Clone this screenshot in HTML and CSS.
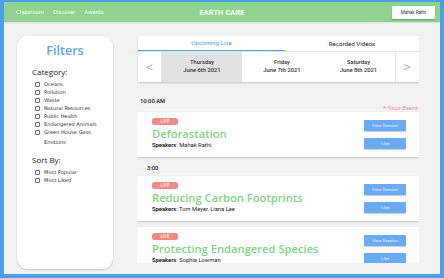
FILE: index.html
```html
<!DOCTYPE html>
<html>
<head>
<meta charset="utf-8">
<link rel="stylesheet" href="styles.css">
</head>
<body>
<div class="frame">
  <header class="topbar">
    <nav class="nav">
      <span>Classroom</span><span>Discover</span><span>Awards</span>
    </nav>
    <div class="brand">EARTH CARE</div>
    <div class="user"><button class="user-btn">Mahak Rathi</button></div>
  </header>
  <div class="content">
    <aside class="filters">
      <h2 class="filters-title">Filters</h2>
      <div class="group-label">Category:</div>
      <ul class="checks">
        <li><span class="box"></span>Oceans</li>
        <li><span class="box"></span>Pollution</li>
        <li><span class="box"></span>Waste</li>
        <li><span class="box"></span>Natural Resources</li>
        <li><span class="box"></span>Public Health</li>
        <li><span class="box"></span>Endangered Animals</li>
        <li><span class="box"></span>Green House Gass</li>
        <li class="cont">Emitions</li>
      </ul>
      <div class="group-label sort">Sort By:</div>
      <ul class="checks">
        <li><span class="box"></span>Most Popular</li>
        <li><span class="box"></span>Most Liked</li>
      </ul>
    </aside>
    <main class="main">
      <section class="tabs-card">
        <div class="tabs">
          <div class="tab active">Upcoming Live</div>
          <div class="tab">Recorded Videos</div>
        </div>
        <div class="days">
          <div class="arrow">&lt;</div>
          <div class="day selected">Thursday<br>June 6th 2021</div>
          <div class="day">Friday<br>June 7th 2021</div>
          <div class="day">Saturday<br>June 8th 2021</div>
          <div class="arrow right">&gt;</div>
        </div>
      </section>
      <div class="slot-head">
        <div class="time">10:00 AM</div>
        <div class="your-event">* Your Event</div>
      </div>
      <article class="event">
        <div class="event-info">
          <span class="live">LIVE</span>
          <div class="event-title">Deforastation</div>
          <div class="speakers"><b>Speakers</b>: Mahak Rathi</div>
        </div>
        <div class="actions">
          <button class="act">View Session</button>
          <button class="act">Like</button>
        </div>
      </article>
      <div class="slot-head second">
        <div class="time indent">3:00</div>
      </div>
      <article class="event">
        <div class="event-info">
          <span class="live">LIVE</span>
          <div class="event-title">Reducing Carbon Footprints</div>
          <div class="speakers"><b>Speakers</b>: Tom Meyer, Liana Lee</div>
        </div>
        <div class="actions">
          <button class="act">View Session</button>
          <button class="act">Like</button>
        </div>
      </article>
      <article class="event third">
        <div class="event-info">
          <span class="live">LIVE</span>
          <div class="event-title">Protecting Endangered Species</div>
          <div class="speakers"><b>Speakers</b>: Sophia Lowman</div>
        </div>
        <div class="actions">
          <button class="act">View Session</button>
          <button class="act">Like</button>
        </div>
      </article>
    </main>
  </div>
</div>
</body>
</html>
```
FILE: styles.css
```css
* { box-sizing: border-box; }
html, body { margin: 0; padding: 0; }
body { width: 444px; height: 278px; overflow: hidden; font-family: Roboto, "Liberation Sans", sans-serif; }

.frame {
  width: 444px;
  height: 278px;
  border: solid #4c9eea;
  border-width: 2px 4px 4px 4px;
  background: #f2f2f2;
  display: flex;
  flex-direction: column;
}

.topbar {
  height: 20px;
  flex: none;
  background: #8ed390;
  display: grid;
  grid-template-columns: 1fr auto 1fr;
  align-items: center;
  color: #fff;
  box-shadow: 0 1px 1px rgba(0,0,0,0.08);
}
.nav { display: flex; gap: 9px; padding-left: 12px; font-size: 5.8px; color: #f4fff4; }
.brand { font-weight: 700; font-size: 7.4px; letter-spacing: 0.1px; }
.user { display: flex; justify-content: flex-end; padding-right: 5px; }
.user-btn {
  width: 43px; height: 13px; border: none; border-radius: 1px;
  background: #fff; font-family: Roboto, sans-serif; font-size: 4.6px; color: #333;
  box-shadow: 0 1px 1.5px rgba(0,0,0,0.25); padding: 0;
}

.content {
  flex: 1;
  display: flex;
  padding: 14px 0 0 13px;
  min-height: 0;
}

.filters {
  width: 96px;
  height: 233px;
  flex: none;
  background: #fff;
  border-radius: 11px;
  box-shadow: 0 1px 2px rgba(0,0,0,0.18);
  padding: 7px 0 0 15px;
  font-family: "Open Sans", sans-serif;
}
.filters-title {
  margin: 0 0 0 -15px;
  text-align: center;
  font-size: 12.5px;
  font-weight: 600;
  color: #5aa3ef;
  line-height: 16px;
}
.group-label { font-size: 8px; color: #222; margin-top: 8px; line-height: 10px; }
.group-label.sort { margin-top: 7px; }
.checks { list-style: none; margin: 3px 0 0 3px; padding: 0; font-family: "DejaVu Sans", Verdana, sans-serif; font-size: 5.1px; color: #333; }
.checks li { display: flex; align-items: center; height: 8px; line-height: 8px; }
.checks li.cont { padding-left: 9px; height: 12px; line-height: 12px; }
.box { width: 5px; height: 5px; border: 0.8px solid #666; border-radius: 1px; margin-right: 4px; flex: none; }

.main {
  width: 282px;
  margin-left: 24px;
  height: 227px;
  overflow: hidden;
  flex: none;
}

.tabs-card {
  background: #fff;
  box-shadow: 0 1px 2px rgba(0,0,0,0.2);
  margin-left: 1px;
  width: 281px;
}
.tabs { display: flex; height: 15px; }
.tab { font-size: 6.2px; display: flex; align-items: center; justify-content: center; color: #222; }
.tab:first-child { width: 147px; }
.tab:last-child { flex: 1; }
.tab.active { color: #4f9ff0; border-bottom: 1px solid #4f9ff0; }
.days { display: flex; height: 31px; border-top: 1px solid #e6e6e6; }
.arrow { width: 24px; display: flex; align-items: center; justify-content: center; font-size: 15px; color: #999; font-weight: 300; border-right: 1px solid #e6e6e6; }
.arrow.right { border-right: none; border-left: 1px solid #e6e6e6; width: 23px; }
.day { width: 80px; display: flex; align-items: center; justify-content: center; text-align: center; font-size: 5.8px; line-height: 7.6px; font-weight: 500; color: #333; }
.day:nth-child(4) { width: 73px; }
.day.selected { background: #e2e2e2; }

.slot-head { height: 30px; position: relative; }
.time { position: absolute; left: 3px; top: 16px; font-size: 5.8px; font-weight: 500; color: #222; }
.time.indent { left: 10px; top: 8px; }
.slot-head.second { height: 19px; }
.your-event { position: absolute; right: 1px; top: 22px; font-size: 6px; color: #f07a7a; font-family: "Open Sans", sans-serif; }

.event {
  background: #fff;
  box-shadow: 0 1px 2px rgba(0,0,0,0.2);
  height: 45px;
  display: flex;
  justify-content: space-between;
  padding: 6px 13px 0 15px;
}
.event + .event { margin-top: 6px; }
.event.third { height: 40px; }
.event-info { display: flex; flex-direction: column; align-items: flex-start; }
.live {
  background: #f08a85; color: #fff; font-size: 4.5px; width: 26px; height: 7px;
  border-radius: 2.5px; display: flex; align-items: center; justify-content: center;
}
.event-title { font-family: "Open Sans", sans-serif; font-size: 11.2px; font-weight: 600; color: #7fd582; line-height: 16px; margin-top: 1px; white-space: nowrap; }
.speakers { font-size: 5.8px; color: #222; margin-top: 0px; line-height: 7px; }
.speakers b { font-weight: 700; }
.actions { display: flex; flex-direction: column; gap: 7px; padding-top: 2px; }
.act {
  width: 42px; height: 11px; border: none; border-radius: 1px; padding: 0;
  background: #6aaaf6; color: #eef5ff; font-family: Roboto, sans-serif; font-size: 4.4px;
  box-shadow: 0 1px 1px rgba(0,0,0,0.2);
}
```
